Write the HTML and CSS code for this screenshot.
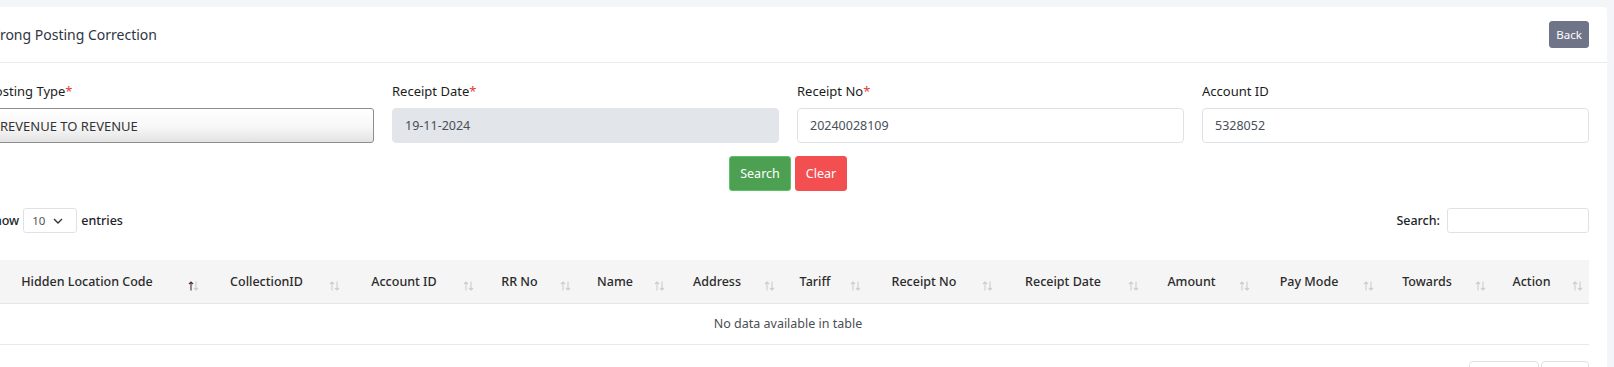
FILE: index.html
```html
<!DOCTYPE html>
<html lang="en">
  <head>
    <meta charset="UTF-8" />
    <meta name="viewport" content="width=device-width, initial-scale=1.0" />
    <title>Wrong Posting Correction</title>
    <link rel="stylesheet" href="styles.css">
  </head>
  <body>
    <div class="page">
      <div class="card">
        <div class="card-header">
          <h4>Wrong Posting Correction</h4>
          <button class="btn btn-back">Back</button>
        </div>
        <div class="card-body">
          <!-- Bộ lọc -->
          <div class="filter-row">
            <div class="form-group">
              <label>Posting Type<span class="req">*</span></label>
              <select class="select-native">
                <option>REVENUE TO REVENUE</option>
              </select>
            </div>
            <div class="form-group">
              <label>Receipt Date<span class="req">*</span></label>
              <input type="text" class="form-control" value="19-11-2024" readonly />
            </div>
            <div class="form-group">
              <label>Receipt No<span class="req">*</span></label>
              <input type="text" class="form-control" value="20240028109" />
            </div>
            <div class="form-group">
              <label>Account ID</label>
              <input type="text" class="form-control" value="5328052" />
            </div>
          </div>
          <div class="actions">
            <button class="btn btn-search">Search</button>
            <button class="btn btn-clear">Clear</button>
          </div>

          <!-- Bảng dữ liệu -->
          <div class="dt-top">
            <div class="dt-length">
              <span>Show</span>
              <div class="len-select">
                <span>10</span>
                <svg width="10" height="6" viewBox="0 0 10 6"><path d="M1 1l4 4 4-4" fill="none" stroke="#333" stroke-width="1.4"/></svg>
              </div>
              <span>entries</span>
            </div>
            <div class="dt-search">
              <span>Search:</span>
              <input type="text" />
            </div>
          </div>

          <table class="dt">
            <colgroup>
              <col style="width: 218px" />
              <col style="width: 141px" />
              <col style="width: 134px" />
              <col style="width: 97px" />
              <col style="width: 94px" />
              <col style="width: 110px" />
              <col style="width: 86px" />
              <col style="width: 132px" />
              <col style="width: 146px" />
              <col style="width: 111px" />
              <col style="width: 124px" />
              <col style="width: 112px" />
              <col style="width: 97px" />
            </colgroup>
            <thead>
              <tr>
                <th><div class="th-in"><span class="th-label">Hidden Location Code</span><svg class="sort active" viewBox="0 0 11 10"><path class="up" d="M3 9.5V1M1 3l2-2 2 2"/><path class="down" d="M8 0.5V9M6 7l2 2 2-2"/></svg></div></th>
                <th><div class="th-in"><span class="th-label">CollectionID</span><svg class="sort" viewBox="0 0 11 10"><path class="up" d="M3 9.5V1M1 3l2-2 2 2"/><path class="down" d="M8 0.5V9M6 7l2 2 2-2"/></svg></div></th>
                <th><div class="th-in"><span class="th-label">Account ID</span><svg class="sort" viewBox="0 0 11 10"><path class="up" d="M3 9.5V1M1 3l2-2 2 2"/><path class="down" d="M8 0.5V9M6 7l2 2 2-2"/></svg></div></th>
                <th><div class="th-in"><span class="th-label">RR No</span><svg class="sort" viewBox="0 0 11 10"><path class="up" d="M3 9.5V1M1 3l2-2 2 2"/><path class="down" d="M8 0.5V9M6 7l2 2 2-2"/></svg></div></th>
                <th><div class="th-in"><span class="th-label">Name</span><svg class="sort" viewBox="0 0 11 10"><path class="up" d="M3 9.5V1M1 3l2-2 2 2"/><path class="down" d="M8 0.5V9M6 7l2 2 2-2"/></svg></div></th>
                <th><div class="th-in"><span class="th-label">Address</span><svg class="sort" viewBox="0 0 11 10"><path class="up" d="M3 9.5V1M1 3l2-2 2 2"/><path class="down" d="M8 0.5V9M6 7l2 2 2-2"/></svg></div></th>
                <th><div class="th-in"><span class="th-label">Tariff</span><svg class="sort" viewBox="0 0 11 10"><path class="up" d="M3 9.5V1M1 3l2-2 2 2"/><path class="down" d="M8 0.5V9M6 7l2 2 2-2"/></svg></div></th>
                <th><div class="th-in"><span class="th-label">Receipt No</span><svg class="sort" viewBox="0 0 11 10"><path class="up" d="M3 9.5V1M1 3l2-2 2 2"/><path class="down" d="M8 0.5V9M6 7l2 2 2-2"/></svg></div></th>
                <th><div class="th-in"><span class="th-label">Receipt Date</span><svg class="sort" viewBox="0 0 11 10"><path class="up" d="M3 9.5V1M1 3l2-2 2 2"/><path class="down" d="M8 0.5V9M6 7l2 2 2-2"/></svg></div></th>
                <th><div class="th-in"><span class="th-label">Amount</span><svg class="sort" viewBox="0 0 11 10"><path class="up" d="M3 9.5V1M1 3l2-2 2 2"/><path class="down" d="M8 0.5V9M6 7l2 2 2-2"/></svg></div></th>
                <th><div class="th-in"><span class="th-label">Pay Mode</span><svg class="sort" viewBox="0 0 11 10"><path class="up" d="M3 9.5V1M1 3l2-2 2 2"/><path class="down" d="M8 0.5V9M6 7l2 2 2-2"/></svg></div></th>
                <th><div class="th-in"><span class="th-label">Towards</span><svg class="sort" viewBox="0 0 11 10"><path class="up" d="M3 9.5V1M1 3l2-2 2 2"/><path class="down" d="M8 0.5V9M6 7l2 2 2-2"/></svg></div></th>
                <th><div class="th-in"><span class="th-label">Action</span><svg class="sort" viewBox="0 0 11 10"><path class="up" d="M3 9.5V1M1 3l2-2 2 2"/><path class="down" d="M8 0.5V9M6 7l2 2 2-2"/></svg></div></th>
              </tr>
            </thead>
            <tbody>
              <tr>
                <td colspan="13" class="empty">No data available in table</td>
              </tr>
            </tbody>
          </table>

          <div class="dt-bottom">
            <div class="pager">
              <button class="page-btn">Previous</button>
              <button class="page-btn">Next</button>
            </div>
          </div>
        </div>
      </div>
    </div>
  </body>
</html>
```

FILE: styles.css
```css
* {
  margin: 0;
  padding: 0;
  box-sizing: border-box;
}

body {
  font-family: "Noto Sans", "Open Sans", sans-serif;
  background-color: #f4f5f8;
  color: #212529;
  overflow: hidden;
}

.page {
  padding: 7px 7px 0 0;
}

.card {
  margin-left: -31px;
  background: #fff;
  border-radius: 4px;
}

.card-header {
  height: 56px;
  padding: 0 18px;
  display: flex;
  justify-content: space-between;
  align-items: center;
  border-bottom: 1px solid #e9ecef;
}

.card-header h4 {
  font-size: 14px;
  font-weight: 400;
  color: #2f3442;
}

.btn {
  border: 1px solid transparent;
  border-radius: 3px;
  color: #fff;
  font-family: inherit;
  cursor: pointer;
}

.btn-back {
  width: 40px;
  height: 27px;
  font-size: 11.5px;
  background-color: #6f7489;
  border-color: #6f7489;
}

.card-body {
  padding: 18px 18px 0;
}

.filter-row {
  display: grid;
  grid-template-columns: repeat(4, 1fr);
  column-gap: 18px;
}

.form-group label {
  display: block;
  font-size: 13px;
  font-weight: 400;
  line-height: 21px;
  margin-bottom: 6px;
  color: #1a1d21;
}

.req {
  color: #e53935;
}

.form-control,
.select-native {
  width: 100%;
  height: 35px;
  font-family: inherit;
  font-size: 12.5px;
  color: #495057;
  padding: 0 12px;
  border: 1px solid #dee2e6;
  border-radius: 4px;
  background: #fff;
  outline: none;
}

.form-control[readonly] {
  background: #e2e5e9;
  border-color: #e2e5e9;
}

.select-native {
  appearance: none;
  -webkit-appearance: none;
  font-size: 13px;
  color: #333;
  border-color: #8d8d8d;
  border-radius: 3px;
  background: linear-gradient(#ffffff 0%, #f7f7f7 55%, #e3e3e3 100%);
}

.actions {
  display: flex;
  justify-content: center;
  gap: 4px;
  margin-top: 13px;
}

.actions .btn {
  height: 35px;
  font-size: 12.5px;
}

.btn-search {
  width: 62px;
  background-color: #4d9f51;
  border-color: #5bc46a;
}

.btn-clear {
  width: 52px;
  background-color: #f34f50;
  border-color: #f34f50;
}

.dt-top {
  display: flex;
  justify-content: space-between;
  align-items: center;
  margin-top: 17px;
  height: 25px;
  font-size: 12.5px;
  font-weight: 500;
}

.dt-length {
  display: flex;
  align-items: center;
  gap: 4px;
}

.len-select {
  width: 54px;
  height: 25px;
  display: flex;
  align-items: center;
  justify-content: space-between;
  padding: 0 13px 0 8px;
  border: 1px solid #dee2e6;
  border-radius: 3px;
  font-size: 11.5px;
  font-weight: 400;
  color: #555;
}

.dt-search {
  display: flex;
  align-items: center;
  gap: 7px;
}

.dt-search input {
  width: 142px;
  height: 25px;
  border: 1px solid #dee2e6;
  border-radius: 3px;
  outline: none;
}

.dt {
  width: 1602px;
  margin-top: 27px;
  border-collapse: collapse;
  table-layout: fixed;
}

.dt thead th {
  height: 43px;
  background: #f5f5f5;
  border-bottom: 1px solid #e6e6e6;
  padding: 0 6px 0 10px;
  font-size: 12.5px;
  font-weight: 500;
  color: #2b2b2b;
  text-align: center;
  vertical-align: middle;
}

.th-in {
  display: flex;
  align-items: center;
}

.th-label {
  flex: 1;
  white-space: nowrap;
  margin-right: 11px;
}

.sort {
  width: 11px;
  height: 10px;
  margin-top: 10px;
  flex-shrink: 0;
  fill: none;
  stroke-width: 1.1;
}

.sort .up,
.sort .down {
  stroke: #c9cdd3;
}

.sort.active .up {
  stroke: #4a2f3c;
}

.dt td.empty {
  height: 41px;
  text-align: center;
  font-size: 12.5px;
  color: #4a4f55;
  border-bottom: 1px solid #e9e9e9;
}

.dt-bottom {
  display: flex;
  justify-content: flex-end;
  margin-top: 16px;
}

.pager {
  display: flex;
  gap: 2px;
}

.page-btn {
  height: 31px;
  padding: 0 10px;
  background: #fff;
  border: 1px solid #dee2e6;
  border-radius: 4px;
  font-family: inherit;
  font-size: 13px;
  color: #888;
}

.page-btn:first-child {
  width: 70px;
}

.page-btn:last-child {
  width: 48px;
}
```
